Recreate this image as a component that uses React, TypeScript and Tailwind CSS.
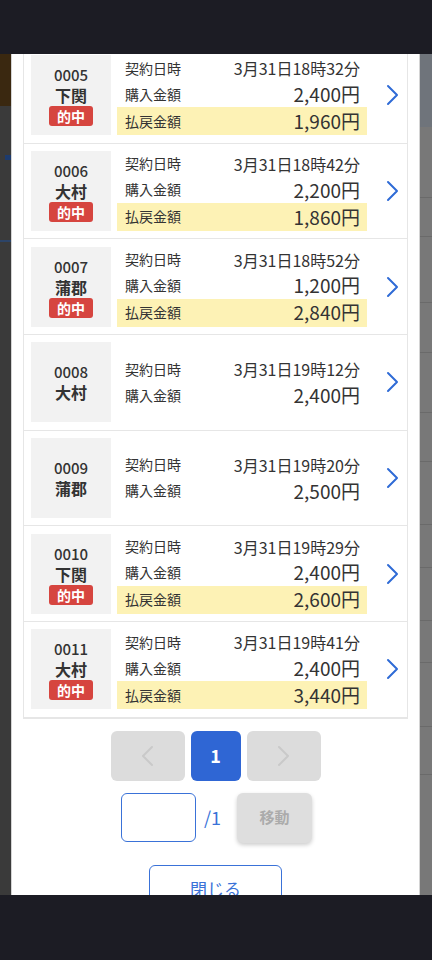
import React from "react";

interface Ticket {
  no: string;
  place: string;
  hit: boolean;
  date: string;
  buy: string;
  pay?: string;
}

const tickets: Ticket[] = [
  { no: "0005", place: "下関", hit: true, date: "3月31日18時32分", buy: "2,400円", pay: "1,960円" },
  { no: "0006", place: "大村", hit: true, date: "3月31日18時42分", buy: "2,200円", pay: "1,860円" },
  { no: "0007", place: "蒲郡", hit: true, date: "3月31日18時52分", buy: "1,200円", pay: "2,840円" },
  { no: "0008", place: "大村", hit: false, date: "3月31日19時12分", buy: "2,400円" },
  { no: "0009", place: "蒲郡", hit: false, date: "3月31日19時20分", buy: "2,500円" },
  { no: "0010", place: "下関", hit: true, date: "3月31日19時29分", buy: "2,400円", pay: "2,600円" },
  { no: "0011", place: "大村", hit: true, date: "3月31日19時41分", buy: "2,400円", pay: "3,440円" },
];

function Chevron({ dir = "right", className = "" }: { dir?: "left" | "right"; className?: string }) {
  return (
    <svg width="13" height="22" viewBox="0 0 13 22" fill="none" className={className}>
      <polyline
        points={dir === "right" ? "2,2 11,11 2,20" : "11,2 2,11 11,20"}
        stroke="currentColor"
        strokeWidth="2"
        strokeLinecap="round"
        strokeLinejoin="round"
      />
    </svg>
  );
}

function TicketRow({ t }: { t: Ticket }) {
  return (
    <div className="flex h-[95.67px] items-center border-b border-[#e6e6e6] pl-[7px]">
      {/* venue box */}
      <div className="flex h-[80px] w-[80px] shrink-0 flex-col items-center justify-center bg-[#f2f2f2] text-[#333]">
        <div className="h-[21px] text-[15px] font-medium leading-[21px]">{t.no}</div>
        <div className="h-[21px] text-[16px] font-bold leading-[21px]">{t.place}</div>
        {t.hit && (
          <div className="flex h-[20px] w-[44px] items-center justify-center rounded-[3px] bg-[#d6453f] text-[14px] font-bold leading-none text-white">
            的中
          </div>
        )}
      </div>

      {/* details */}
      <div className="ml-[6px] flex w-[250px] shrink-0 flex-col text-[#333]">
        <div className="flex h-[26px] items-center justify-between pl-2 pr-[7px]">
          <span className="text-[14px]">契約日時</span>
          <span className="text-[16px]">{t.date}</span>
        </div>
        <div className="flex h-[26px] items-center justify-between pl-2 pr-[7px]">
          <span className="text-[14px]">購入金額</span>
          <span className="text-[19px]">{t.buy}</span>
        </div>
        {t.pay && (
          <div className="flex h-[28px] items-center justify-between bg-[#fdf2b5] pl-2 pr-[7px]">
            <span className="text-[14px]">払戻金額</span>
            <span className="text-[19px]">{t.pay}</span>
          </div>
        )}
      </div>

      <div className="flex flex-1 justify-center pl-[10px] text-[#2f6bd6]">
        <Chevron />
      </div>
    </div>
  );
}

export default function App() {
  return (
    <div className="flex h-[960px] w-[432px] flex-col overflow-hidden bg-[#3a3a3a] font-['Noto_Sans_CJK_JP','Noto_Sans',sans-serif]">
      {/* status bar */}
      <div className="h-[54px] shrink-0 bg-[#1c1c24]" />

      <div className="flex min-h-0 flex-1">
        {/* dimmed page, left */}
        <div className="flex w-[11px] shrink-0 flex-col bg-[#3a3a3a]">
          <div className="h-[52px] bg-[#3a2810]" />
          <div className="ml-[5px] mt-[49px] h-[5px] w-[6px] bg-[#1d3b6e]" />
          <div className="mt-[80px] h-[2px] bg-[#2c4468]" />
        </div>

        {/* modal */}
        <div className="flex w-[409px] shrink-0 flex-col overflow-hidden border-x border-[#d4d4d4] bg-white px-[11px]">
          <div className="-mt-[6px] border border-t-0 border-[#e6e6e6]">
            {tickets.map((t) => (
              <TicketRow key={t.no} t={t} />
            ))}
          </div>

          {/* pager */}
          <div className="mt-[12px] flex justify-center gap-[6px]">
            <button className="flex h-[50px] w-[74px] items-center justify-center rounded-[6px] bg-[#dcdcdc] text-[#c9c9c9]">
              <Chevron dir="left" />
            </button>
            <button className="flex h-[50px] w-[50px] items-center justify-center rounded-[6px] bg-[#2f66d4] text-[18px] font-bold text-white">
              1
            </button>
            <button className="flex h-[50px] w-[74px] items-center justify-center rounded-[6px] bg-[#dcdcdc] text-[#c9c9c9]">
              <Chevron />
            </button>
          </div>

          <div className="mt-[12px] flex items-center justify-center pl-[2px]">
            <div className="h-[49px] w-[75px] rounded-[6px] border border-[#3a72d8] bg-white" />
            <span className="ml-[8px] text-[18px] text-[#3a72d8]">/1</span>
            <button className="ml-[16px] flex h-[50px] w-[75px] items-center justify-center rounded-[6px] bg-[#dedede] text-[15px] font-bold text-[#ababab] shadow-[0_2px_4px_rgba(0,0,0,0.2)]">
              移動
            </button>
          </div>

          <div className="mt-[22px] flex justify-center">
            <button className="flex h-[48px] w-[133px] shrink-0 items-center justify-center rounded-[6px] border border-[#3a72d8] bg-white text-[17px] text-[#3a72d8]">
              閉じる
            </button>
          </div>
        </div>

        {/* dimmed page, right */}
        <div className="flex min-w-0 flex-1 flex-col bg-[#787878]">
          <div className="h-[73px] bg-[#6f747b]" />
          <div className="mt-[70px] h-px bg-[#6a6a6a]" />
          <div className="mt-[38px] h-px bg-[#6a6a6a]" />
          <div className="mt-[65px] h-px bg-[#6a6a6a]" />
          <div className="mt-[49px] h-px bg-[#6a6a6a]" />
          <div className="mt-[59px] h-px bg-[#6a6a6a]" />
          <div className="mt-[48px] h-px bg-[#6a6a6a]" />
          <div className="mt-[62px] h-px bg-[#6a6a6a]" />
          <div className="mt-[42px] h-px bg-[#6a6a6a]" />
          <div className="mt-[52px] h-px bg-[#6a6a6a]" />
          <div className="mt-[41px] h-px bg-[#6a6a6a]" />
          <div className="mt-[63px] h-px bg-[#6a6a6a]" />
          <div className="mt-[47px] h-px bg-[#6a6a6a]" />
        </div>
      </div>

      {/* nav bar */}
      <div className="h-[65px] shrink-0 bg-[#1c1c24]" />
    </div>
  );
}
